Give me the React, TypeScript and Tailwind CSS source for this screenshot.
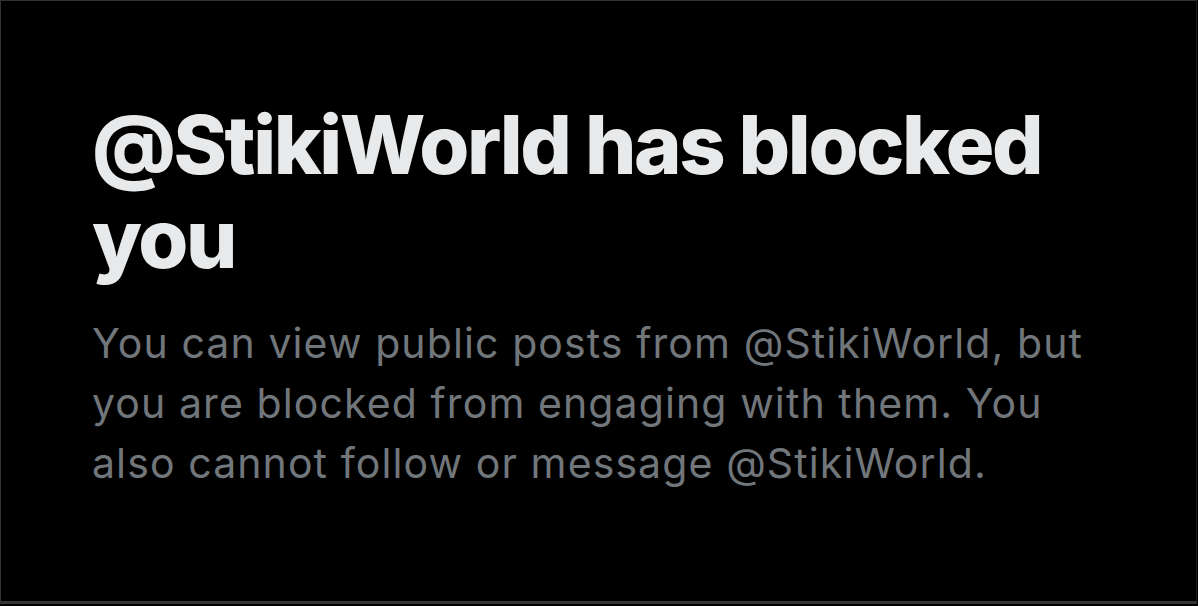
import React from 'react';

const handle = '@StikiWorld';

const BlockedNotice: React.FC = () => {
    return (
        <div className="w-[1198px] h-[606px] bg-black">
            <div className="h-[604px] w-[1197px] border-t border-l border-r border-b-[3px] border-t-[#2f3336] border-l-[#2f3336] border-r-[#1c1d1f] border-b-[#333538] px-[91px] pt-[97px]">
                <h1 className="text-[81px] leading-[94px] font-extrabold text-[#e7e9ea] tracking-[-2.4px] font-['Inter',sans-serif]">
                    {handle} has blocked you
                </h1>
                <p className="mt-[27px] text-[41px] leading-[60px] text-[#71767b] tracking-[1.1px] font-['Inter',sans-serif]">
                    You can view public posts from {handle}, but you are blocked from engaging with them. You also cannot follow or message {handle}.
                </p>
            </div>
        </div>
    );
};

export default function App() {
    return <BlockedNotice />;
}
